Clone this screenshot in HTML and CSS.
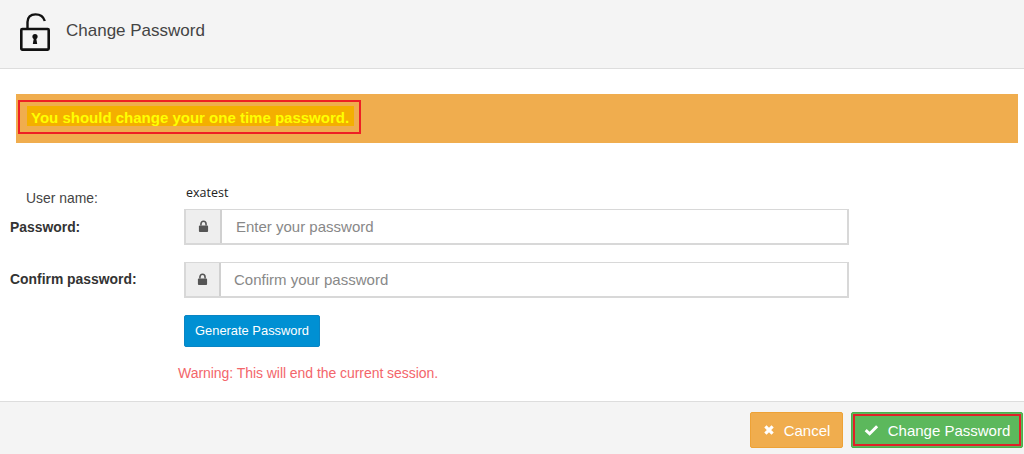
FILE: index.html
```html
<!DOCTYPE html>
<html lang="en">
<head>
    <meta charset="UTF-8">
    <meta name="viewport" content="width=device-width, initial-scale=1.0">
    <title>Change Password</title>
    <link rel="stylesheet" href="styles.css">
</head>
<body>
    <div class="header">
        <svg class="header-icon" viewBox="0 0 30 38" width="30" height="38">
            <path d="M7.5 16 V9 C7.5 4 10.5 1.4 15.5 1.4 C20.5 1.4 23.4 3.4 24.8 8" fill="none" stroke="#111" stroke-width="2.4"/>
            <rect x="1.3" y="16" width="27.4" height="20.6" rx="1" fill="none" stroke="#111" stroke-width="2.6"/>
            <circle cx="15" cy="23.5" r="2.6" fill="#111"/>
            <path d="M14 24 L12.8 31 H17.2 L16 24 Z" fill="#111"/>
        </svg>
        <span class="header-title">Change Password</span>
    </div>

    <div class="content">
        <div class="banner">
            <div class="banner-box">
                <span class="banner-text">You should change your one time password.</span>
            </div>
        </div>

        <div class="form">
            <div class="user-row">
                <span class="user-label">User name:</span>
                <span class="user-value">exatest</span>
            </div>
            <div class="form-row">
                <label class="form-label" for="password">Password:</label>
                <div class="input-group">
                    <span class="input-addon">
                        <svg viewBox="0 0 12 14" width="11" height="13"><path d="M3.2 6 V4.2 C3.2 2.4 4.4 1.2 6 1.2 C7.6 1.2 8.8 2.4 8.8 4.2 V6" fill="none" stroke="#555" stroke-width="1.7"/><rect x="1" y="6" width="10" height="7" rx="1" fill="#555"/></svg>
                    </span>
                    <input class="input-field" id="password" type="text" placeholder="Enter your password">
                </div>
            </div>
            <div class="form-row">
                <label class="form-label form-label-up" for="confirm">Confirm password:</label>
                <div class="input-group">
                    <span class="input-addon input-addon-narrow">
                        <svg viewBox="0 0 12 14" width="11" height="13"><path d="M3.2 6 V4.2 C3.2 2.4 4.4 1.2 6 1.2 C7.6 1.2 8.8 2.4 8.8 4.2 V6" fill="none" stroke="#555" stroke-width="1.7"/><rect x="1" y="6" width="10" height="7" rx="1" fill="#555"/></svg>
                    </span>
                    <input class="input-field input-confirm" id="confirm" type="text" placeholder="Confirm your password">
                </div>
            </div>
            <button class="generate-btn">Generate Password</button>
            <p class="warning">Warning: This will end the current session.</p>
        </div>
    </div>

    <div class="footer">
        <button class="btn btn-cancel">
            <svg viewBox="0 0 12 12" width="12" height="12"><path d="M2.4 2.4 L9.6 9.6 M9.6 2.4 L2.4 9.6" fill="none" stroke="#fff" stroke-width="3.2"/></svg>
            Cancel
        </button>
        <button class="btn btn-change">
            <svg viewBox="0 0 16 12" width="15" height="12"><path d="M1.8 6.2 L6 10 L14 2" fill="none" stroke="#fff" stroke-width="3.2"/></svg>
            Change Password
        </button>
    </div>
</body>
</html>
```

FILE: styles.css
```css
* {
    margin: 0;
    padding: 0;
    box-sizing: border-box;
}

body {
    font-family: "Liberation Sans", Arial, sans-serif;
    font-size: 14px;
    color: #333;
    background: #fff;
}

.header {
    height: 69px;
    display: flex;
    align-items: center;
    padding-left: 20px;
    background: #f4f4f4;
    border-bottom: 1px solid #ddd;
}

.header-icon {
    margin-right: 16px;
    margin-top: -4px;
}

.header-title {
    font-size: 17px;
    color: #444;
    margin-top: -7px;
}

.content {
    height: 332px;
    padding: 25px 6px 0 16px;
}

.banner {
    height: 49px;
    padding: 6px 0 0 2px;
    background: #f0ad4e;
}

.banner-box {
    width: 343px;
    height: 34px;
    padding-top: 4px;
    padding-left: 7px;
    border: 2px solid #ee2024;
}

.banner-text {
    display: block;
    width: 327px;
    height: 20px;
    padding-left: 4px;
    padding-top: 2px;
    font-size: 15px;
    line-height: 19px;
    font-weight: bold;
    white-space: nowrap;
    color: #ffff00;
    background: #f4af00;
}

.form {
    margin-left: -6px;
}

.user-row {
    height: 66px;
    position: relative;
    padding: 47px 0 0 16px;
    font-size: 13.9px;
    color: #444;
}

.user-value {
    position: absolute;
    left: 176px;
    top: 41px;
    font-family: "Open Sans", sans-serif;
    font-size: 12.5px;
    color: #222;
}

.form-row {
    display: flex;
    align-items: center;
    height: 36px;
    margin-bottom: 17px;
}

.form-label {
    width: 174px;
    font-size: 13.9px;
    font-weight: bold;
    color: #333;
}

.form-label-up {
    margin-top: -2px;
}

.input-group {
    display: flex;
    width: 665px;
    height: 100%;
    border: 2px solid #d8d8d8;
    border-top-width: 1px;
}

.input-addon {
    width: 36px;
    flex-shrink: 0;
    display: flex;
    align-items: center;
    justify-content: center;
    background: #eee;
    border-right: 2px solid #d0d0d0;
}

.input-addon-narrow {
    width: 35px;
}

.input-field {
    flex: 1;
    border: none;
    outline: none;
    padding-left: 14px;
    font-family: inherit;
    font-size: 15px;
}

.input-confirm {
    padding-left: 13px;
}

.input-field::placeholder {
    color: #888;
    opacity: 1;
}

.generate-btn {
    display: block;
    width: 136px;
    height: 32px;
    margin: 0 0 0 174px;
    padding-bottom: 2px;
    border: 1px solid #0a85c4;
    border-radius: 2px;
    font-family: inherit;
    font-size: 12.9px;
    color: #fff;
    background: #0090d3;
}

.warning {
    margin: 18px 0 0 168px;
    letter-spacing: -0.05px;
    color: #f3666b;
}

.footer {
    height: 53px;
    display: flex;
    justify-content: flex-end;
    gap: 8px;
    padding: 10px 1px 0 0;
    background: #f4f4f4;
    border-top: 1px solid #ddd;
}

.btn {
    height: 36px;
    display: flex;
    align-items: center;
    justify-content: center;
    gap: 9px;
    border-radius: 2px;
    font-family: inherit;
    font-size: 15px;
    color: #fff;
}

.btn-cancel {
    width: 93px;
    border: 1px solid #eea236;
    background: #f0ad4e;
}

.btn-change {
    width: 172px;
    border: 1px solid #4cae4c;
    outline: 2px solid #e02027;
    outline-offset: -4px;
    background: #5cb85c;
}
```
